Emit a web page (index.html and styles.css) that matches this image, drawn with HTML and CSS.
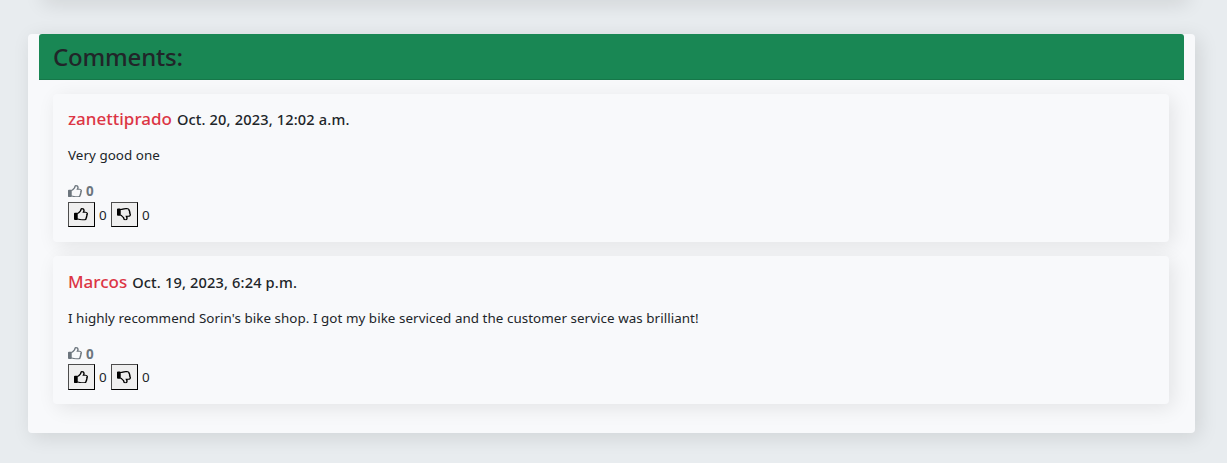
FILE: index.html
```
<!DOCTYPE html>
<html lang="en">
<head>
<meta charset="utf-8">
<title>Comments</title>
<link rel="stylesheet" href="styles.css">
</head>
<body>
<svg class="defs" aria-hidden="true">
  <symbol id="thumb" viewBox="0 0 480 512" preserveAspectRatio="none"><path d="M466.27 286.69C475.04 271.84 480 256 480 236.85c0-44.015-37.218-85.58-85.82-85.58H357.7c4.92-12.81 8.85-28.13 8.85-46.54C366.55 31.936 328.86 0 271.28 0c-61.607 0-58.093 94.933-71.76 108.6-22.747 22.747-49.615 66.447-68.76 83.4H32c-17.673 0-32 14.327-32 32v240c0 17.673 14.327 32 32 32h64c14.893 0 27.408-10.174 30.978-23.95 44.509 1.001 75.06 39.94 177.802 39.94 7.22 0 15.22.01 22.22.01 77.117 0 111.986-39.423 112.94-95.33 13.319-18.425 20.299-43.122 17.34-66.99 9.854-18.452 13.664-40.343 8.99-62.99zm-61.75 53.83c12.56 21.13 1.26 49.41-13.94 57.57 7.7 48.78-17.608 65.9-53.12 65.9h-37.82c-71.639 0-118.029-37.82-171.64-37.82V240h10.92c28.36 0 67.98-70.89 94.54-97.46 28.36-28.36 18.91-75.63 37.82-94.54 47.27 0 47.27 32.98 47.27 56.73 0 39.17-28.36 56.72-28.36 94.54h103.99c21.11 0 37.73 18.91 37.82 37.82.09 18.9-12.82 37.81-22.27 37.81 13.489 14.555 16.371 45.236-5.21 65.62z"/></symbol>
</svg>
<div class="previous"></div>
<main class="panel">
  <header class="panel-header"><h2 class="panel-title">Comments:</h2></header>
  <section class="list">
    <article class="comment">
      <h3 class="byline"><span class="author">zanettiprado</span><span class="date">Oct. 20, 2023, 12:02 a.m.</span></h3>
      <p class="text">Very good one</p>
      <div class="total"><svg class="icon"><use href="#thumb"/></svg><span>0</span></div>
      <div class="votes">
        <button class="vote"><svg class="icon"><use href="#thumb"/></svg></button><span class="count">0</span>
        <button class="vote"><svg class="icon down"><use href="#thumb"/></svg></button><span class="count">0</span>
      </div>
    </article>
    <article class="comment comment-last">
      <h3 class="byline"><span class="author">Marcos</span><span class="date">Oct. 19, 2023, 6:24 p.m.</span></h3>
      <p class="text">I highly recommend Sorin's bike shop. I got my bike serviced and the customer service was brilliant!</p>
      <div class="total"><svg class="icon"><use href="#thumb"/></svg><span>0</span></div>
      <div class="votes">
        <button class="vote"><svg class="icon"><use href="#thumb"/></svg></button><span class="count">0</span>
        <button class="vote"><svg class="icon down"><use href="#thumb"/></svg></button><span class="count">0</span>
      </div>
    </article>
  </section>
</main>
</body>
</html>
```
FILE: styles.css
```
* { box-sizing: border-box; }
body {
  margin: 0;
  height: 463px;
  overflow: hidden;
  background: #e8ecef;
  color: #212529;
  font-family: "Segoe UI", "Noto Sans", "Open Sans", sans-serif;
  font-size: 13.4px;
}
.defs { display: none; }
.previous {
  height: 20px;
  margin: -20px 43px 0 39px;
  border-radius: 4px;
  box-shadow: 4px 4px 20px rgba(0, 0, 0, .11);
}
.panel {
  height: 399px;
  margin: 34px 32px 0 28px;
  padding: 0 11px;
  border-radius: 4px;
  background: #f8f9fb;
  box-shadow: 4px 4px 20px rgba(0, 0, 0, .11);
}
.panel-header {
  height: 46px;
  padding: 0 14px;
  display: flex;
  align-items: center;
  background: #198754;
  border-bottom: 1px solid #167749;
  border-radius: 3px 3px 0 0;
}
.panel-title {
  margin: 0;
  font-size: 24px;
  line-height: 30px;
  font-weight: 500;
  letter-spacing: -.2px;
}
.list {
  display: flex;
  flex-direction: column;
  gap: 14px;
  padding: 14px 15px 0 14px;
}
.comment {
  height: 148px;
  padding: 14px 15px;
  border-radius: 4px;
  background: #f8f9fb;
  box-shadow: 4px 4px 20px rgba(0, 0, 0, .09);
}
.byline {
  display: flex;
  align-items: baseline;
  gap: 5px;
  height: 21px;
  margin: 0 0 15px;
  line-height: 21px;
}
.author { color: #dc3545; font-size: 17px; font-weight: 500; }
.date { font-size: 14.6px; font-weight: 500; letter-spacing: .15px; }
.text { margin: 0 0 14px; line-height: 22px; letter-spacing: .05px; }
.icon { display: block; width: 14px; height: 12.5px; fill: currentColor; }
.down { transform: scaleY(-1); }
.total {
  display: flex;
  align-items: center;
  gap: 4px;
  height: 22px;
  color: #6c757d;
  font-weight: 700;
}
.votes { display: flex; align-items: center; gap: 4px; height: 25px; }
.vote {
  width: 27px;
  height: 25px;
  padding: 0 0 0 5px;
  border: 1px solid;
  border-color: #4d4d4d #000 #000 #4d4d4d;
  background: #efefef;
  color: #000;
}
.count { width: 8px; line-height: 24px; }
.comment-last { padding-top: 15px; }
.comment-last .total { height: 21px; }
.comment-last .votes { height: 26px; }
.comment-last .vote { height: 26px; }
```
